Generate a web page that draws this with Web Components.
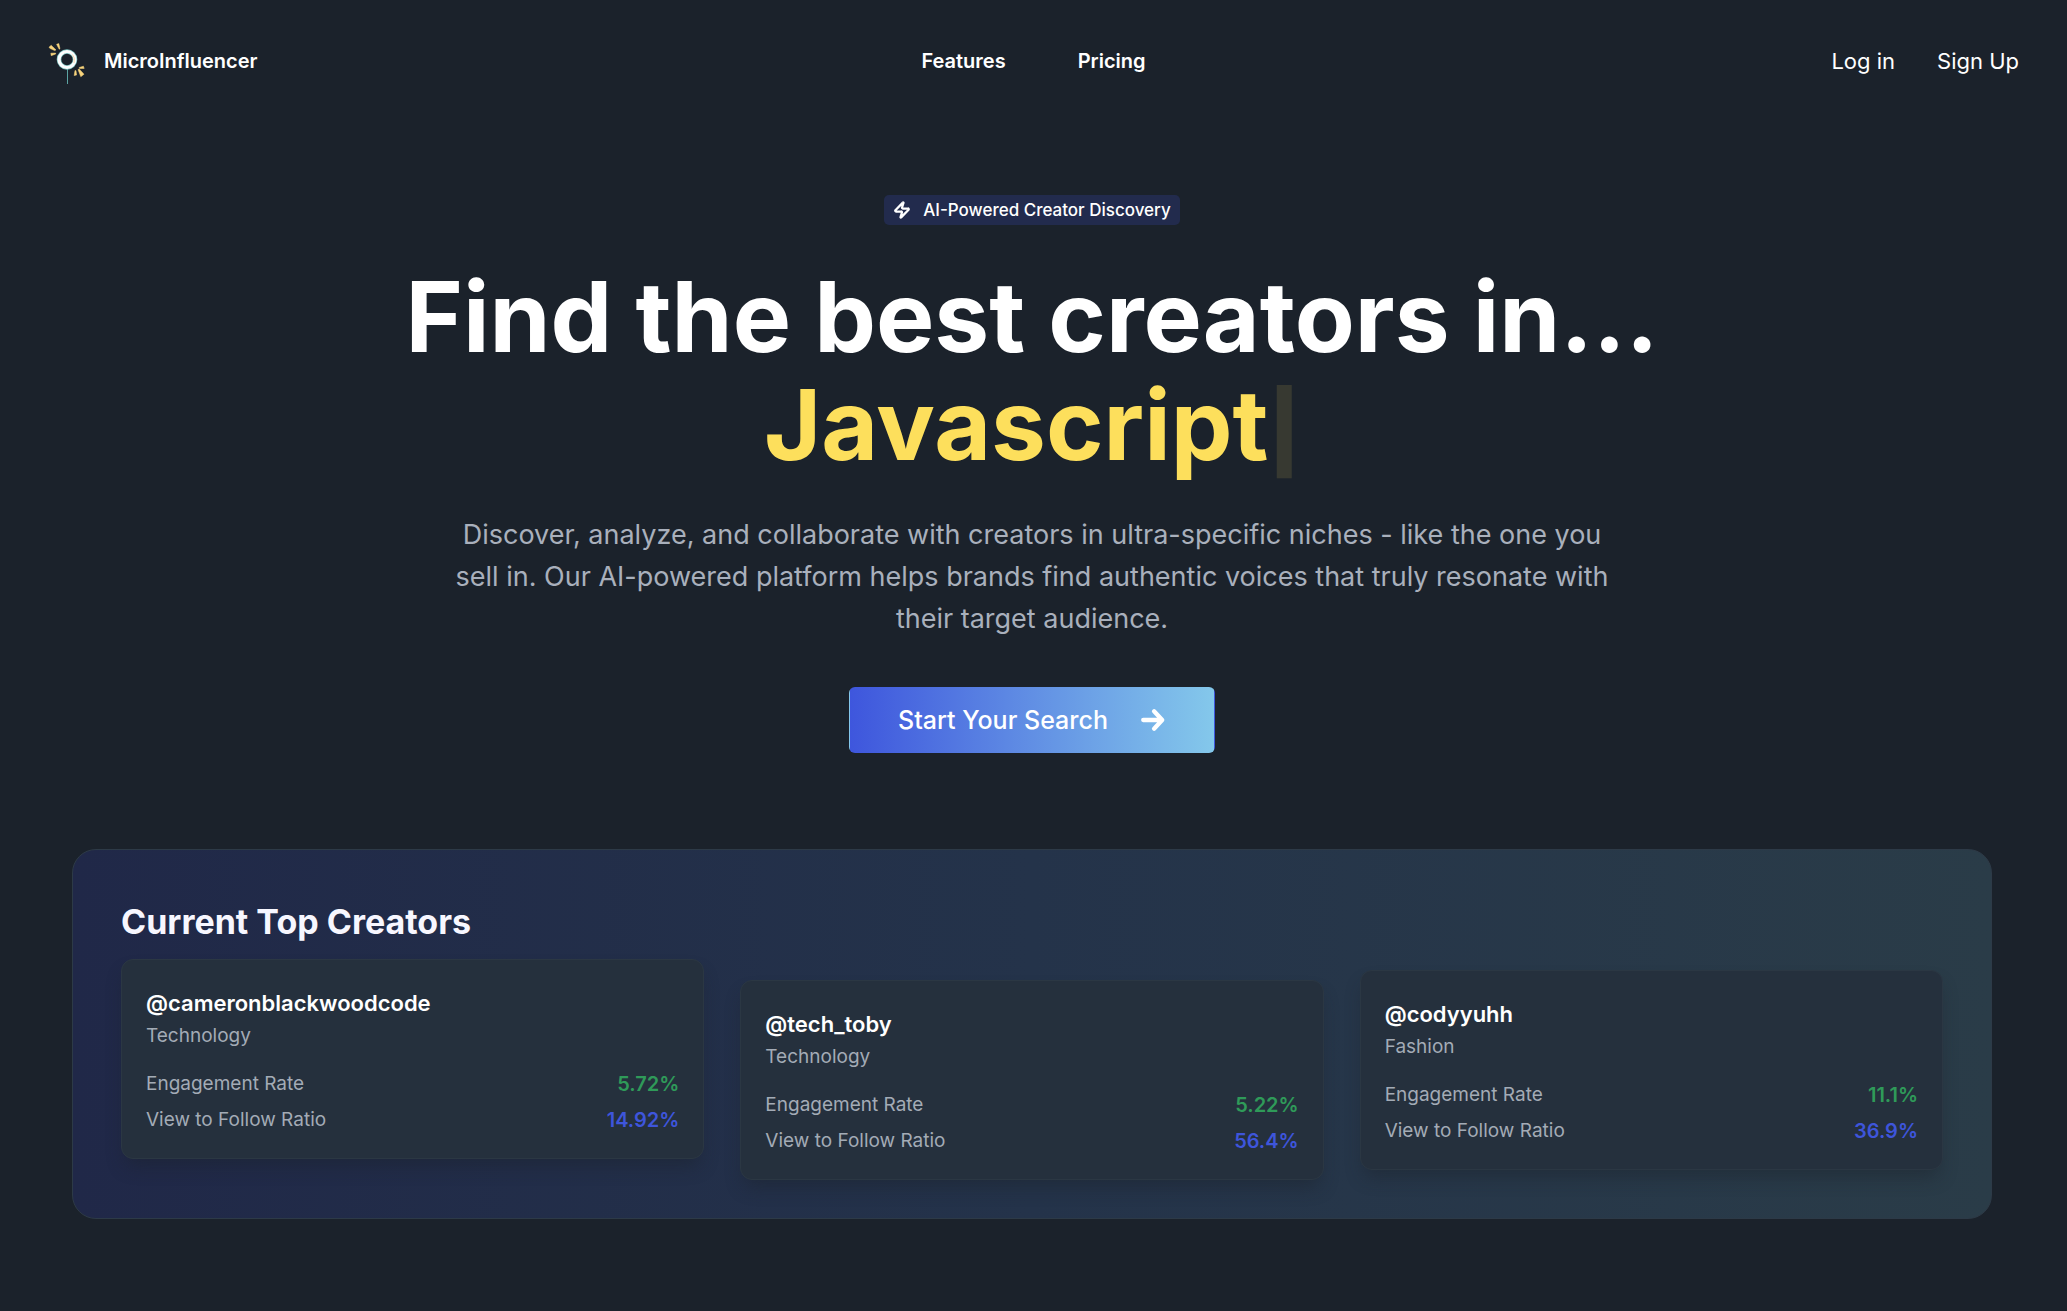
<!DOCTYPE html>
<html lang="en">
<head>
<meta charset="utf-8">
<meta name="viewport" content="width=device-width, initial-scale=1">
<title>MicroInfluencer</title>
<style>
  body {
    margin: 0;
    min-height: 100vh;
    background: #1b222b;
    color: #fff;
    font-family: Inter, "Liberation Sans", sans-serif;
    font-size: 20px;
    line-height: 28px;
  }
</style>
</head>
<body>
<landing-page></landing-page>

<template id="brand-logo">
  <style>
    :host { display: block; }
    a { display: flex; align-items: center; gap: 17px; color: inherit; text-decoration: none; font-size: 20px; font-weight: 600; }
    svg { display: block; width: 39px; height: 46px; }
  </style>
  <a href="#">
    <svg viewBox="0 -2 39 46" aria-hidden="true">
      <path d="M19.500 28V44" stroke="#5ba3a2" stroke-width="1"/>
      <circle cx="19" cy="19.500" r="8" fill="none" stroke="#7fc4c2" stroke-width="4.600"/>
      <circle cx="19" cy="19.500" r="8" fill="none" stroke="#fdfefe" stroke-width="3.200"/>
      <path d="M24.500 14.500Q27.500 18 26 23" fill="none" stroke="#f9dcb0" stroke-width="1"/>
      <g fill="#f8d47c" stroke="#f8d47c" stroke-width=".5">
        <path d="M8.600 4.300L10.800 3.600L12 8.700L11.200 9.200Z"/>
        <path d="M1 7.200L3.200 5.300L8 9.900L6.600 10.600L1.800 8.300Z"/>
        <path d="M2.800 13.200L7.600 13.100L7.700 14L3.200 15.700Z"/>
        <path d="M31.200 27.500L35.400 26.200L36.200 28.400L31.600 28.600Z"/>
        <path d="M30 29.500L31.200 29L36 34.200L32.800 36.700Z"/>
        <path d="M27 30.500L28 30.700L28.600 35L26.200 35.600Z"/>
      </g>
    </svg>
    <span><slot></slot></span>
  </a>
</template>

<template id="site-header">
  <style>
    :host { display: block; }
    header { display: grid; grid-template-columns: 1fr auto 1fr; align-items: center; padding: 38px 48px; }
    nav { display: flex; gap: 72px; font-weight: 600; }
    .account { justify-self: end; gap: 42px; font-size: 22px; font-weight: 400; }
    a { color: inherit; text-decoration: none; }
  </style>
  <header>
    <brand-logo>MicroInfluencer</brand-logo>
    <nav aria-label="Main"><a href="#features">Features</a><a href="#pricing">Pricing</a></nav>
    <nav class="account" aria-label="Account"><a href="#login">Log in</a><a href="#signup">Sign Up</a></nav>
  </header>
</template>

<template id="feature-badge">
  <style>
    :host { display: inline-flex; align-items: center; gap: 12px; padding: 0 9px; border-radius: 5px; background: #222b4d; font-size: 17px; line-height: 30px; font-weight: 500; }
    svg { width: 18px; height: 18px; fill: none; stroke: currentColor; stroke-width: 3; stroke-linecap: round; stroke-linejoin: round; }
  </style>
  <svg viewBox="0 0 24 24" aria-hidden="true"><path d="M4 14a1 1 0 0 1-.78-1.630l9.900-10.200a.5.5 0 0 1 .86.460l-1.920 6.020A1 1 0 0 0 13 10h7a1 1 0 0 1 .78 1.630l-9.900 10.200a.5.5 0 0 1-.86-.460l1.920-6.020A1 1 0 0 0 11 14z"/></svg>
  <slot></slot>
</template>

<template id="search-button">
  <style>
    :host { display: inline-block; }
    button { display: flex; align-items: center; gap: 32px; height: 66px; padding: 0 48px; border: 1px solid transparent; border-radius: 6px; background: linear-gradient(to right, #3e56dd, #84c8eb); color: #fff; font: 500 25px/36px Inter, "Liberation Sans", sans-serif; cursor: pointer; }
    svg { width: 26px; height: 26px; fill: none; stroke: currentColor; stroke-width: 4; stroke-linecap: round; stroke-linejoin: round; }
  </style>
  <button type="button"><slot></slot>
    <svg viewBox="0 0 24 24" aria-hidden="true"><path d="M3 12h16M13 4l7.500 8l-7.500 8"/></svg>
  </button>
</template>

<template id="hero-section">
  <style>
    :host { display: flex; flex-direction: column; align-items: center; padding: 73px 72px 96px; text-align: center; }
    h1 { margin: 38px 0 0; font-size: 98px; line-height: 108px; font-weight: 700; }
    .niche { display: block; color: #fddf5c; }
    .caret { font-size: 78px; line-height: 78px; font-weight: 900; opacity: .12; }
    p { max-width: 1180px; margin: 35px 0 47px; color: #a9b0bc; font-size: 27px; line-height: 42px; }
  </style>
  <feature-badge>AI-Powered Creator Discovery</feature-badge>
  <h1>Find the best creators in... <span class="niche">Javascript<span class="caret">|</span></span></h1>
  <p>Discover, analyze, and collaborate with creators in ultra-specific niches - like the one you sell in. Our AI-powered platform helps brands find authentic voices that truly resonate with their target audience.</p>
  <search-button>Start Your Search</search-button>
</template>

<template id="creator-card">
  <style>
    :host { display: block; flex: 1 1 0; padding: 24px; border: 1px solid #2b3743; border-radius: 12px; background: #25303d; box-shadow: 0 11px 18px -4px rgba(27, 34, 43, .45); }
    h3 { margin: 3px 0 0; font-size: 22px; line-height: 32px; font-weight: 600; }
    p { margin: 3px 0 0; color: #a3abb6; font-size: 19px; line-height: 28px; }
    dl { display: grid; gap: 8px; margin: 20px 0 0; }
    dl div { display: flex; justify-content: space-between; }
    dt { color: #a3abb6; font-size: 19px; }
    dd { margin: 0; font-weight: 600; color: #2f9a59; }
    .ratio { color: #3e55db; }
  </style>
  <h3><slot name="handle"></slot></h3>
  <p><slot name="field"></slot></p>
  <dl>
    <div><dt>Engagement Rate</dt><dd><slot name="engagement"></slot></dd></div>
    <div><dt>View to Follow Ratio</dt><dd class="ratio"><slot name="ratio"></slot></dd></div>
  </dl>
</template>

<template id="top-creators">
  <style>
    :host { display: block; margin: 0 72px; padding: 48px 48px 38px; border: 1px solid #2d3a47; border-radius: 24px; background: linear-gradient(to right, #202848, #24334a 50%, #2a3c48); }
    h2 { margin: 0; color: #f7f7ff; font-size: 34px; line-height: 48px; font-weight: 700; }
    .cards { display: flex; align-items: flex-start; gap: 36px; margin-top: 13px; }
    .low { margin-top: 21px; }
    .mid { margin-top: 11px; }
  </style>
  <h2>Current Top Creators</h2>
  <div class="cards">
    <creator-card><span slot="handle">@cameronblackwoodcode</span><span slot="field">Technology</span><span slot="engagement">5.72%</span><span slot="ratio">14.92%</span></creator-card>
    <creator-card class="low"><span slot="handle">@tech_toby</span><span slot="field">Technology</span><span slot="engagement">5.22%</span><span slot="ratio">56.4%</span></creator-card>
    <creator-card class="mid"><span slot="handle">@codyyuhh</span><span slot="field">Fashion</span><span slot="engagement">11.1%</span><span slot="ratio">36.9%</span></creator-card>
  </div>
</template>

<template id="landing-page">
  <style>
    :host, main { display: block; }
    main { padding-right: 3px; }
  </style>
  <site-header></site-header>
  <main>
    <hero-section></hero-section>
    <top-creators></top-creators>
  </main>
</template>

<script>
  class TemplateElement extends HTMLElement {
    constructor() {
      super();
      const template = document.getElementById(this.localName);
      this.attachShadow({ mode: "open" }).append(document.importNode(template.content, true));
    }
  }
  for (const name of ["brand-logo", "site-header", "feature-badge", "search-button", "hero-section", "creator-card", "top-creators", "landing-page"]) {
    customElements.define(name, class extends TemplateElement {});
  }
</script>
</body>
</html>
